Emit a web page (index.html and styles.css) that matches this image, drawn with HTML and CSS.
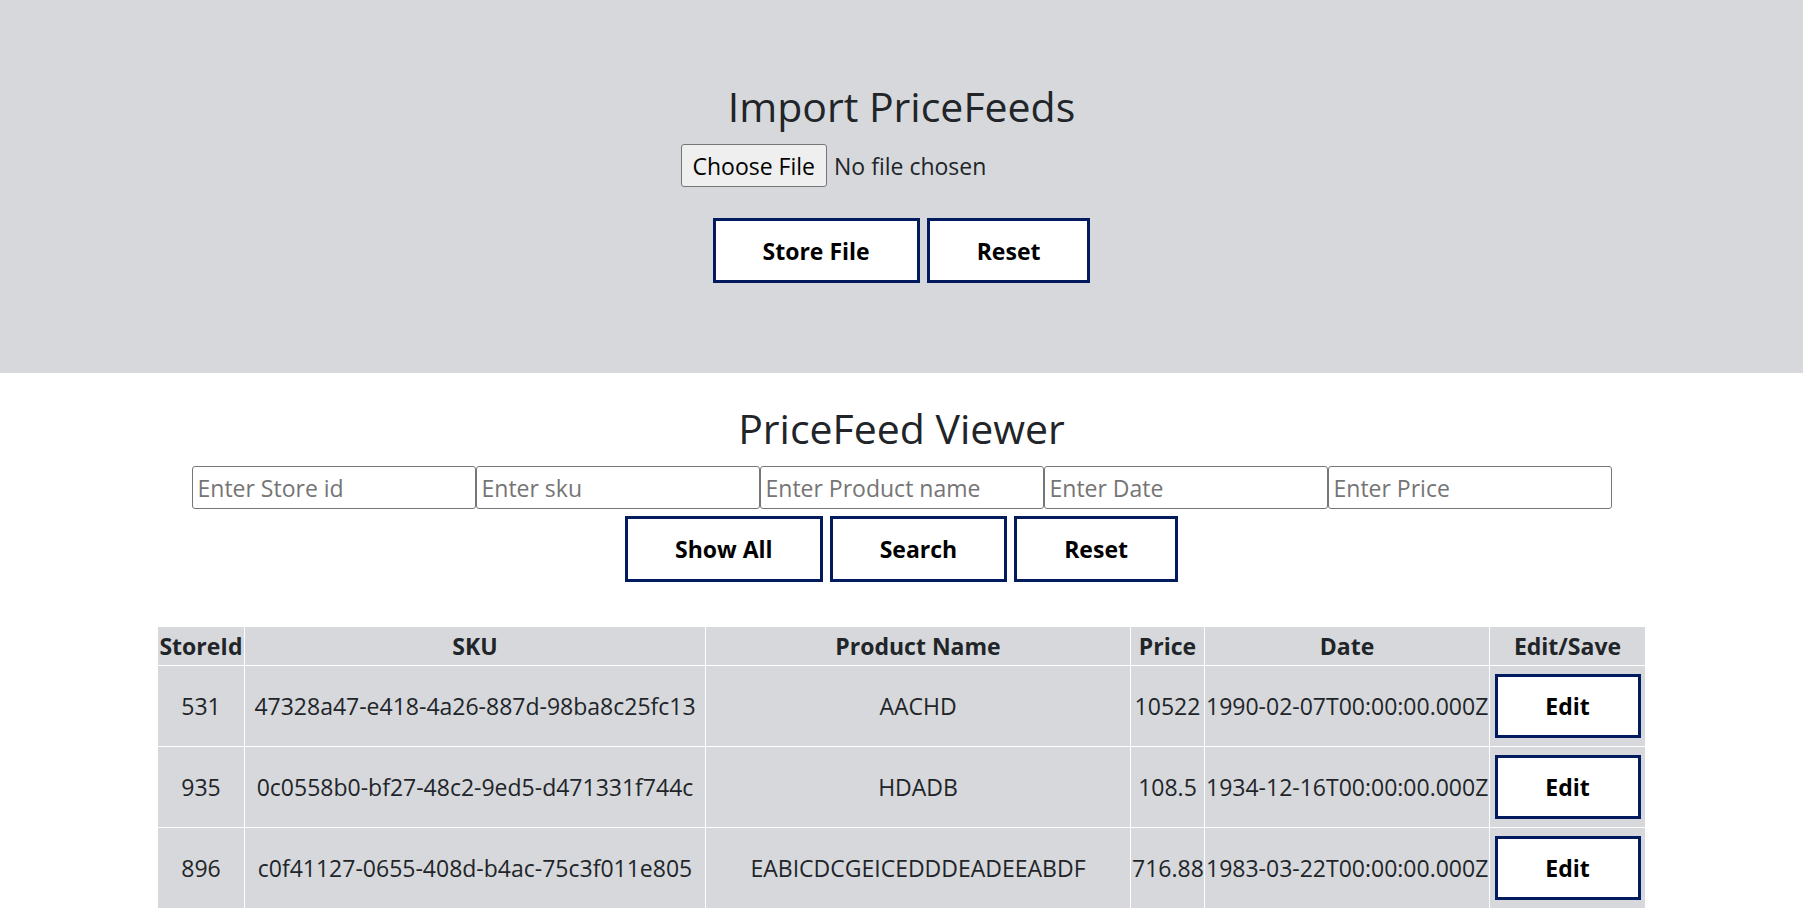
FILE: index.html
```html
<!DOCTYPE html>
<html lang="en">
<head>
<meta charset="utf-8">
<title>PriceFeeds</title>
<link rel="stylesheet" href="styles.css">
</head>
<body>
  <section class="import">
    <h1 class="title">Import PriceFeeds</h1>
    <div class="file-row">
      <input class="file-input" type="file">
    </div>
    <div class="btn-row btn-row-import">
      <button class="btn" type="button">Store File</button>
      <button class="btn" type="button">Reset</button>
    </div>
  </section>

  <section class="viewer">
    <h1 class="title">PriceFeed Viewer</h1>
    <div class="filters">
      <input class="filter" type="text" placeholder="Enter Store id">
      <input class="filter" type="text" placeholder="Enter sku">
      <input class="filter" type="text" placeholder="Enter Product name">
      <input class="filter" type="text" placeholder="Enter Date">
      <input class="filter" type="text" placeholder="Enter Price">
    </div>
    <div class="btn-row btn-row-viewer">
      <button class="btn" type="button">Show All</button>
      <button class="btn" type="button">Search</button>
      <button class="btn" type="button">Reset</button>
    </div>

    <table class="feed-table">
      <colgroup>
        <col class="c-store">
        <col class="c-sku">
        <col class="c-name">
        <col class="c-price">
        <col class="c-date">
        <col class="c-edit">
      </colgroup>
      <thead>
        <tr>
          <th>StoreId</th>
          <th>SKU</th>
          <th>Product Name</th>
          <th>Price</th>
          <th>Date</th>
          <th>Edit/Save</th>
        </tr>
      </thead>
      <tbody>
        <tr>
          <td>531</td>
          <td>47328a47-e418-4a26-887d-98ba8c25fc13</td>
          <td>AACHD</td>
          <td>10522</td>
          <td>1990-02-07T00:00:00.000Z</td>
          <td><button class="btn btn-edit" type="button">Edit</button></td>
        </tr>
        <tr>
          <td>935</td>
          <td>0c0558b0-bf27-48c2-9ed5-d471331f744c</td>
          <td>HDADB</td>
          <td>108.5</td>
          <td>1934-12-16T00:00:00.000Z</td>
          <td><button class="btn btn-edit" type="button">Edit</button></td>
        </tr>
        <tr>
          <td>896</td>
          <td>c0f41127-0655-408d-b4ac-75c3f011e805</td>
          <td>EABICDCGEICEDDDEADEEABDF</td>
          <td>716.88</td>
          <td>1983-03-22T00:00:00.000Z</td>
          <td><button class="btn btn-edit" type="button">Edit</button></td>
        </tr>
      </tbody>
    </table>
  </section>
</body>
</html>
```

FILE: styles.css
```css
html, body {
  margin: 0;
  padding: 0;
}

body {
  font-family: "Open Sans", "Noto Sans", sans-serif;
  font-size: 23px;
  color: #212529;
  background: #ffffff;
}

.import {
  background: #d6d8db;
  padding: 79px 0 90px;
  display: flex;
  flex-direction: column;
  align-items: center;
}

.title {
  margin: 0;
  font-size: 41px;
  line-height: 55px;
  font-weight: 500;
  color: #212529;
  text-align: center;
}

.file-row {
  margin-top: 10px;
  height: 43px;
}

.file-input {
  display: block;
  width: 442px;
  height: 43px;
  font-family: inherit;
  font-size: 23px;
  line-height: normal;
  color: #212529;
}

.file-input::file-selector-button {
  box-sizing: border-box;
  height: 43px;
  font-family: inherit;
  font-size: 23px;
  padding: 0 11px;
  margin: 0 7px 0 0;
  background: #efefef;
  border: 1px solid #767676;
  border-radius: 3px;
  color: #000;
}

.btn-row {
  display: flex;
  justify-content: center;
  gap: 7px;
}

.btn-row-import {
  margin-top: 31px;
}

.btn {
  height: 65px;
  padding: 0 47px;
  background: #ffffff;
  border: 3px solid #021b5e;
  font-family: inherit;
  font-size: 23px;
  font-weight: 700;
  color: #000;
  cursor: pointer;
}

.viewer {
  display: flex;
  flex-direction: column;
  align-items: center;
  padding-top: 28px;
}

.filters {
  display: flex;
  margin-top: 10px;
}

.filter {
  box-sizing: border-box;
  width: 284px;
  height: 43px;
  padding: 0 5px;
  border: 1px solid #767676;
  border-radius: 3px;
  font-family: inherit;
  font-size: 23px;
  color: #212529;
  background: #fff;
}

.filter::placeholder {
  color: #757575;
}

.btn-row-viewer {
  margin-top: 7px;
}

.btn-row-viewer .btn {
  height: 66px;
}

.feed-table {
  margin-top: 44px;
  width: 1488px;
  table-layout: fixed;
  border-collapse: collapse;
  background: #d6d8db;
  color: #212529;
}

.c-store { width: 87px; }
.c-sku { width: 461px; }
.c-name { width: 425px; }
.c-price { width: 74px; }
.c-date { width: 285px; }
.c-edit { width: 156px; }

.feed-table th,
.feed-table td {
  border: 1px solid #ffffff;
  text-align: center;
  vertical-align: middle;
  white-space: nowrap;
  padding: 0 1px;
}

.feed-table th {
  font-weight: 700;
  height: 38px;
  line-height: 32px;
}

.feed-table td {
  height: 80px;
}

.btn-edit {
  width: 146px;
  height: 64px;
  padding: 0;
}
```
